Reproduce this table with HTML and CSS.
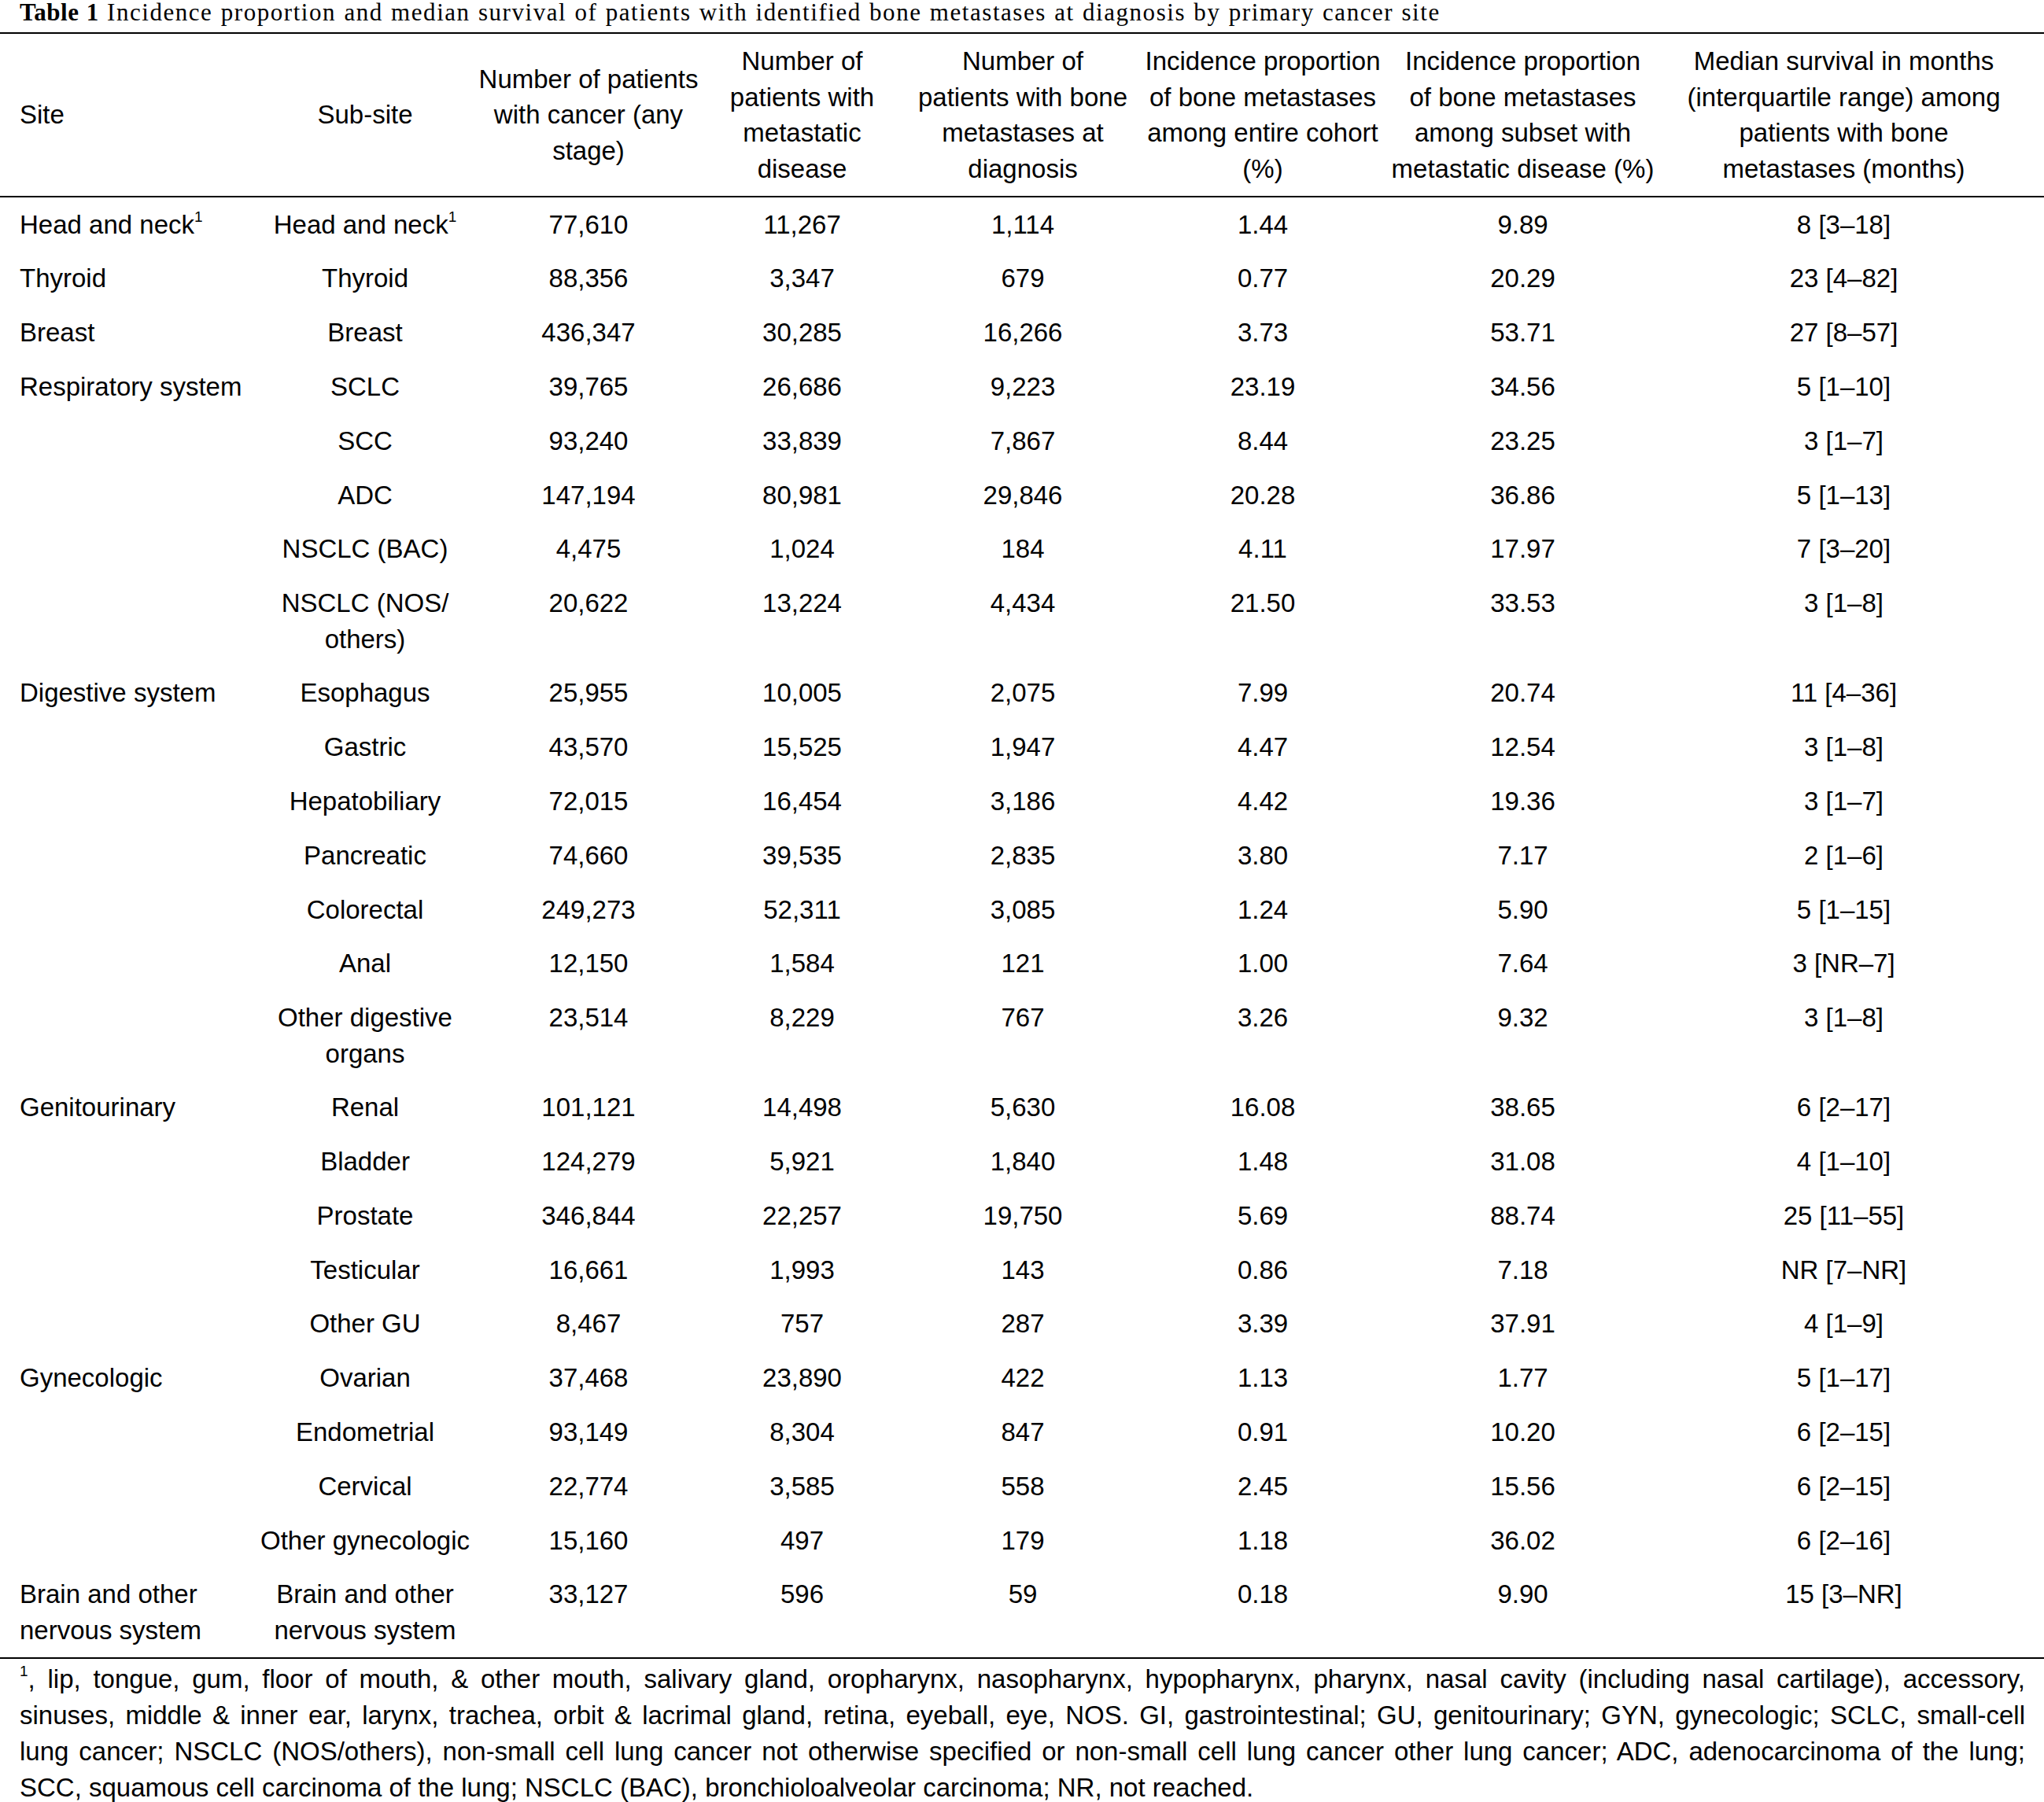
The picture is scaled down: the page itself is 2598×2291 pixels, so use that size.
FILE: index.html
```html
<!DOCTYPE html>
<html lang="en">
<head>
<meta charset="utf-8">
<title>Table 1</title>
<link rel="stylesheet" href="styles.css">
</head>
<body>
<div class="page">
  <h1 class="caption"><b>Table 1</b> Incidence proportion and median survival of patients with identified bone metastases at diagnosis by primary cancer site</h1>
  <table class="data">
    <colgroup>
      <col class="c1"><col class="c2"><col class="c3"><col class="c4"><col class="c5"><col class="c6"><col class="c7"><col class="c8">
    </colgroup>
    <thead>
      <tr>
        <th class="site">Site</th>
        <th class="sub">Sub-site</th>
        <th>Number of patients<br>with cancer (any<br>stage)</th>
        <th>Number of<br>patients with<br>metastatic<br>disease</th>
        <th>Number of<br>patients with bone<br>metastases at<br>diagnosis</th>
        <th>Incidence proportion<br>of bone metastases<br>among entire cohort<br>(%)</th>
        <th>Incidence proportion<br>of bone metastases<br>among subset with<br>metastatic disease (%)</th>
        <th class="last">Median survival in months<br>(interquartile range) among<br>patients with bone<br>metastases (months)</th>
      </tr>
    </thead>
    <tbody>
      <tr><td class="site">Head and neck<sup>1</sup></td><td class="sub">Head and neck<sup>1</sup></td><td>77,610</td><td>11,267</td><td>1,114</td><td>1.44</td><td>9.89</td><td class="last">8 [3–18]</td></tr>
      <tr><td class="site">Thyroid</td><td class="sub">Thyroid</td><td>88,356</td><td>3,347</td><td>679</td><td>0.77</td><td>20.29</td><td class="last">23 [4–82]</td></tr>
      <tr><td class="site">Breast</td><td class="sub">Breast</td><td>436,347</td><td>30,285</td><td>16,266</td><td>3.73</td><td>53.71</td><td class="last">27 [8–57]</td></tr>
      <tr><td class="site">Respiratory system</td><td class="sub">SCLC</td><td>39,765</td><td>26,686</td><td>9,223</td><td>23.19</td><td>34.56</td><td class="last">5 [1–10]</td></tr>
      <tr><td class="site"></td><td class="sub">SCC</td><td>93,240</td><td>33,839</td><td>7,867</td><td>8.44</td><td>23.25</td><td class="last">3 [1–7]</td></tr>
      <tr><td class="site"></td><td class="sub">ADC</td><td>147,194</td><td>80,981</td><td>29,846</td><td>20.28</td><td>36.86</td><td class="last">5 [1–13]</td></tr>
      <tr><td class="site"></td><td class="sub">NSCLC (BAC)</td><td>4,475</td><td>1,024</td><td>184</td><td>4.11</td><td>17.97</td><td class="last">7 [3–20]</td></tr>
      <tr><td class="site"></td><td class="sub">NSCLC (NOS/<br>others)</td><td>20,622</td><td>13,224</td><td>4,434</td><td>21.50</td><td>33.53</td><td class="last">3 [1–8]</td></tr>
      <tr><td class="site">Digestive system</td><td class="sub">Esophagus</td><td>25,955</td><td>10,005</td><td>2,075</td><td>7.99</td><td>20.74</td><td class="last">11 [4–36]</td></tr>
      <tr><td class="site"></td><td class="sub">Gastric</td><td>43,570</td><td>15,525</td><td>1,947</td><td>4.47</td><td>12.54</td><td class="last">3 [1–8]</td></tr>
      <tr><td class="site"></td><td class="sub">Hepatobiliary</td><td>72,015</td><td>16,454</td><td>3,186</td><td>4.42</td><td>19.36</td><td class="last">3 [1–7]</td></tr>
      <tr><td class="site"></td><td class="sub">Pancreatic</td><td>74,660</td><td>39,535</td><td>2,835</td><td>3.80</td><td>7.17</td><td class="last">2 [1–6]</td></tr>
      <tr><td class="site"></td><td class="sub">Colorectal</td><td>249,273</td><td>52,311</td><td>3,085</td><td>1.24</td><td>5.90</td><td class="last">5 [1–15]</td></tr>
      <tr><td class="site"></td><td class="sub">Anal</td><td>12,150</td><td>1,584</td><td>121</td><td>1.00</td><td>7.64</td><td class="last">3 [NR–7]</td></tr>
      <tr><td class="site"></td><td class="sub">Other digestive<br>organs</td><td>23,514</td><td>8,229</td><td>767</td><td>3.26</td><td>9.32</td><td class="last">3 [1–8]</td></tr>
      <tr><td class="site">Genitourinary</td><td class="sub">Renal</td><td>101,121</td><td>14,498</td><td>5,630</td><td>16.08</td><td>38.65</td><td class="last">6 [2–17]</td></tr>
      <tr><td class="site"></td><td class="sub">Bladder</td><td>124,279</td><td>5,921</td><td>1,840</td><td>1.48</td><td>31.08</td><td class="last">4 [1–10]</td></tr>
      <tr><td class="site"></td><td class="sub">Prostate</td><td>346,844</td><td>22,257</td><td>19,750</td><td>5.69</td><td>88.74</td><td class="last">25 [11–55]</td></tr>
      <tr><td class="site"></td><td class="sub">Testicular</td><td>16,661</td><td>1,993</td><td>143</td><td>0.86</td><td>7.18</td><td class="last">NR [7–NR]</td></tr>
      <tr><td class="site"></td><td class="sub">Other GU</td><td>8,467</td><td>757</td><td>287</td><td>3.39</td><td>37.91</td><td class="last">4 [1–9]</td></tr>
      <tr><td class="site">Gynecologic</td><td class="sub">Ovarian</td><td>37,468</td><td>23,890</td><td>422</td><td>1.13</td><td>1.77</td><td class="last">5 [1–17]</td></tr>
      <tr><td class="site"></td><td class="sub">Endometrial</td><td>93,149</td><td>8,304</td><td>847</td><td>0.91</td><td>10.20</td><td class="last">6 [2–15]</td></tr>
      <tr><td class="site"></td><td class="sub">Cervical</td><td>22,774</td><td>3,585</td><td>558</td><td>2.45</td><td>15.56</td><td class="last">6 [2–15]</td></tr>
      <tr><td class="site"></td><td class="sub">Other gynecologic</td><td>15,160</td><td>497</td><td>179</td><td>1.18</td><td>36.02</td><td class="last">6 [2–16]</td></tr>
      <tr><td class="site">Brain and other<br>nervous system</td><td class="sub">Brain and other<br>nervous system</td><td>33,127</td><td>596</td><td>59</td><td>0.18</td><td>9.90</td><td class="last">15 [3–NR]</td></tr>
    </tbody>
  </table>
  <div class="footnote">
    <span class="fline"><sup>1</sup>, lip, tongue, gum, floor of mouth, &amp; other mouth, salivary gland, oropharynx, nasopharynx, hypopharynx, pharynx, nasal cavity (including nasal cartilage), accessory,</span>
    <span class="fline">sinuses, middle &amp; inner ear, larynx, trachea, orbit &amp; lacrimal gland, retina, eyeball, eye, NOS. GI, gastrointestinal; GU, genitourinary; GYN, gynecologic; SCLC, small-cell</span>
    <span class="fline">lung cancer; NSCLC (NOS/others), non-small cell lung cancer not otherwise specified or non-small cell lung cancer other lung cancer; ADC, adenocarcinoma of the lung;</span>
    <span class="fline lastline">SCC, squamous cell carcinoma of the lung; NSCLC (BAC), bronchioloalveolar carcinoma; NR, not reached.</span>
  </div>
</div>
</body>
</html>
```
FILE: styles.css
```css
html, body {
  margin: 0;
  padding: 0;
  background: #ffffff;
  color: #000000;
}

.page {
  width: 2598px;
  font-family: "Liberation Sans", Arial, sans-serif;
  font-size: 33px;
}

.caption {
  margin: 0 0 11px 0;
  padding: 2px 0 0 25px;
  font-family: "Liberation Serif", "Times New Roman", serif;
  font-size: 31px;
  line-height: 28px;
  letter-spacing: 1.55px;
  word-spacing: 1px;
  font-weight: normal;
  white-space: nowrap;
}

.caption b {
  font-weight: bold;
  letter-spacing: 0.5px;
}

.data {
  width: 2598px;
  table-layout: fixed;
  border-collapse: collapse;
  border-top: 2px solid #000;
  border-bottom: 2px solid #000;
}

.c1 { width: 318px; }
.c2 { width: 287px; }
.c3 { width: 286px; }
.c4 { width: 257px; }
.c5 { width: 304px; }
.c6 { width: 306px; }
.c7 { width: 355px; }
.c8 { width: 485px; }

.data th,
.data td {
  padding: 11.65px 0;
  line-height: 45.5px;
  font-weight: normal;
  text-align: center;
  vertical-align: top;
  white-space: nowrap;
}

.data thead th {
  padding: 12px 0;
  vertical-align: middle;
  border-bottom: 2px solid #000;
}

.data .site {
  text-align: left;
  padding-left: 25px;
}

.data .sub {
  padding-left: 5px;
}

.data .last {
  padding-right: 24px;
}

sup {
  font-size: 19px;
  line-height: 0;
  vertical-align: 0;
  position: relative;
  top: -15px;
}

.footnote {
  padding: 2.5px 24px 0 25px;
  line-height: 46.3px;
}

.fline {
  display: block;
  text-align: justify;
  text-align-last: justify;
  white-space: nowrap;
}

.fline.lastline {
  text-align-last: left;
}
```
